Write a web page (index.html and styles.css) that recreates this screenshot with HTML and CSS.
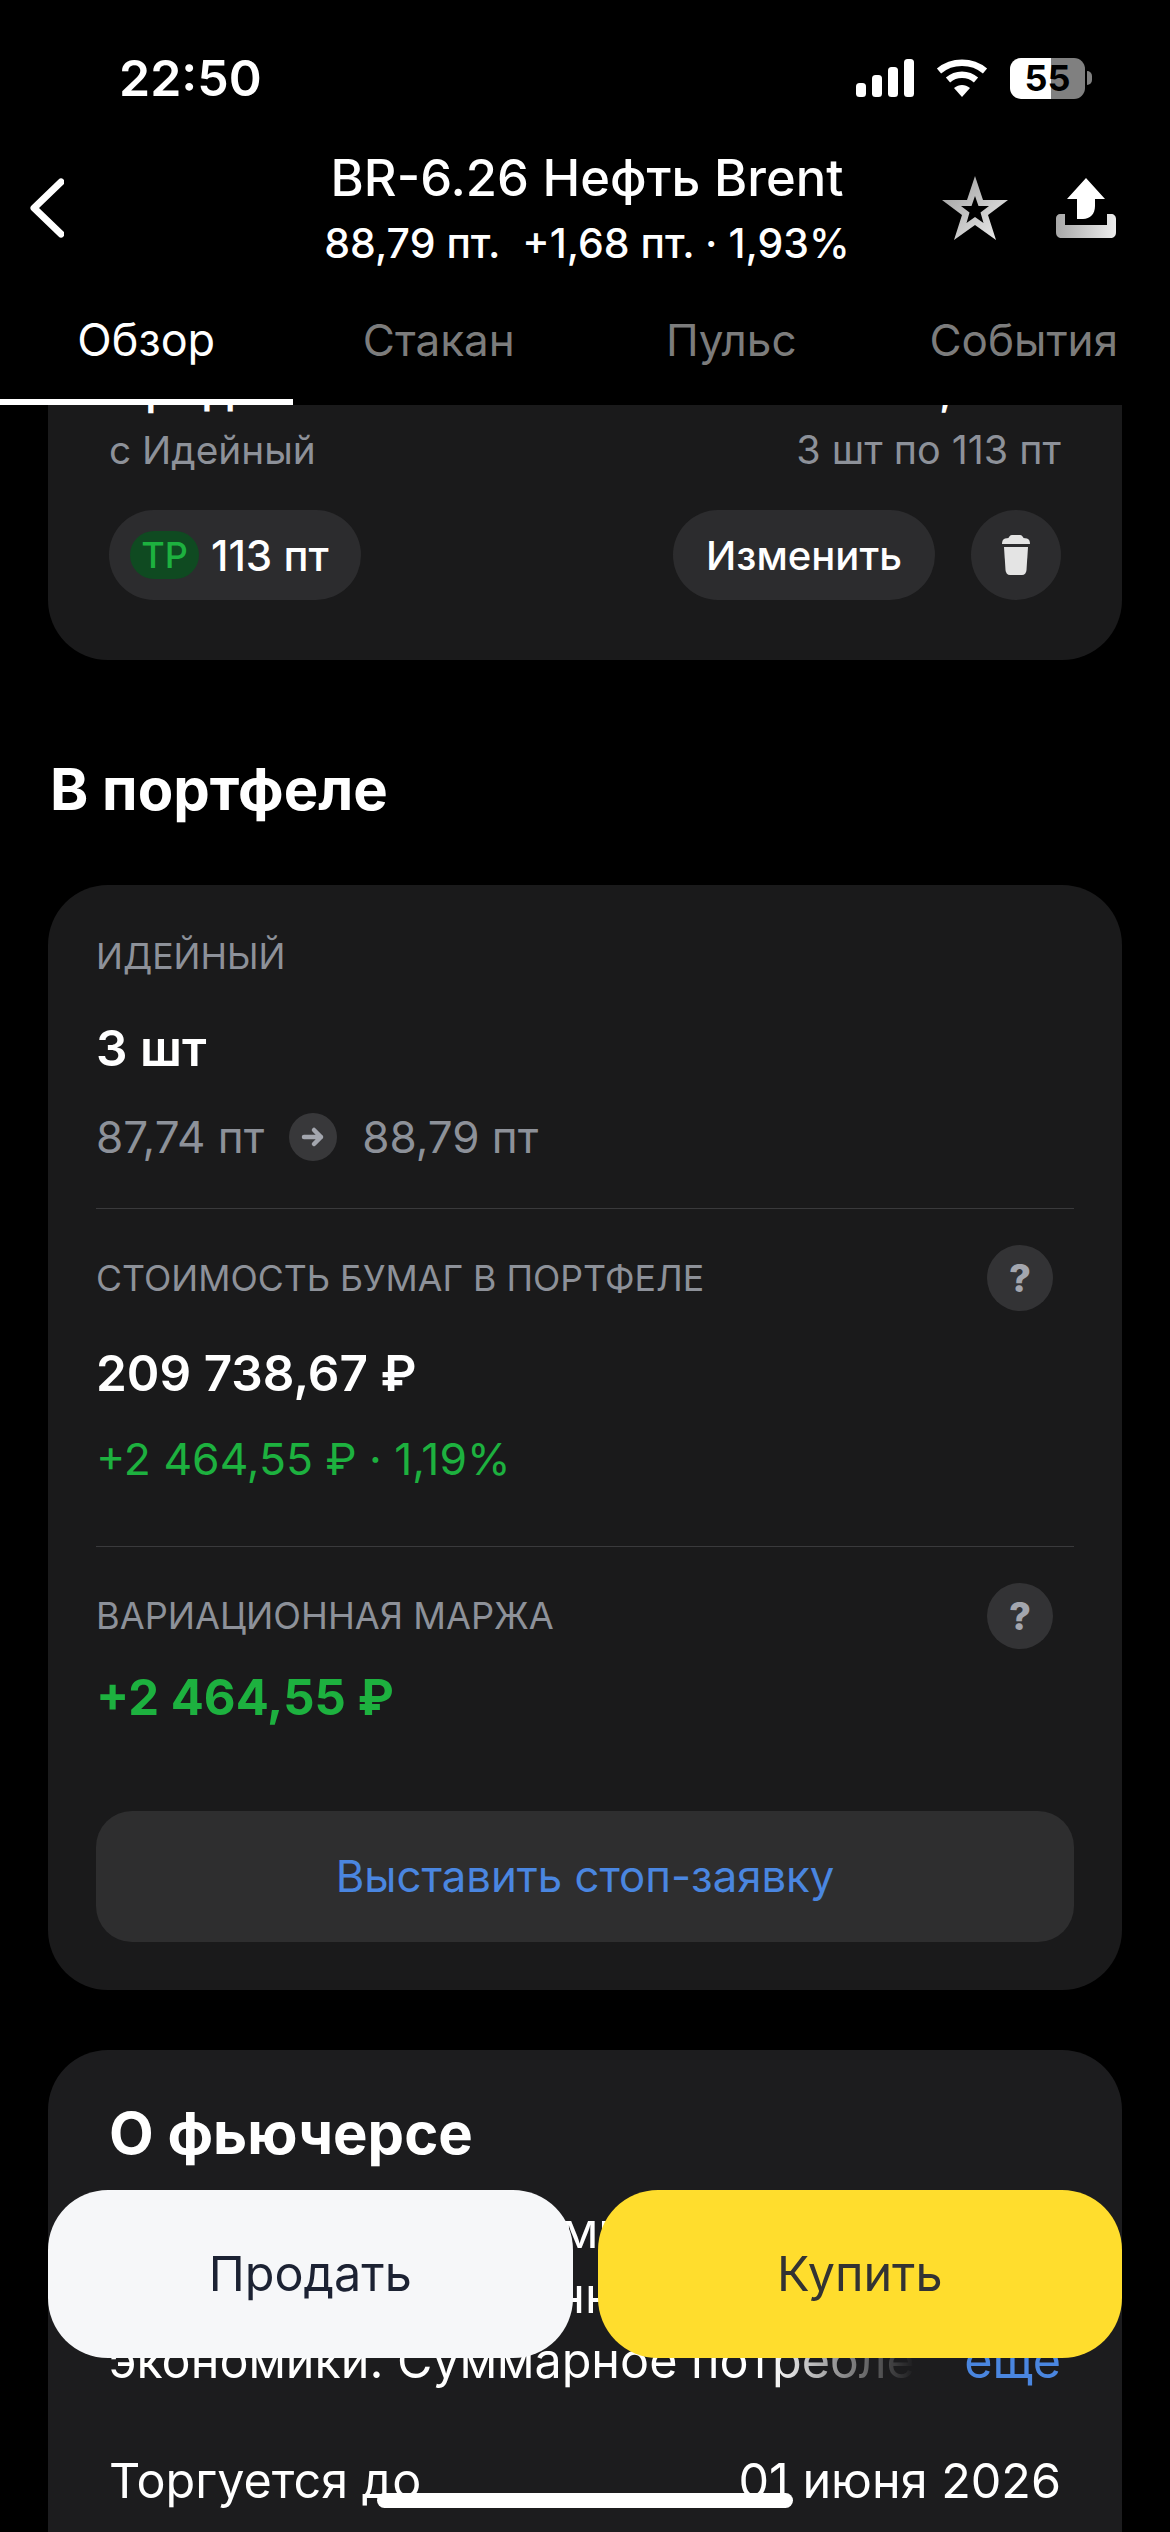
FILE: index.html
```html
<!DOCTYPE html>
<html lang="ru">
  <head>
    <title>BR-6.26 Нефть Brent</title>
    <meta name="viewport" content="width=device-width, initial-scale=1" />
    <link rel="stylesheet" href="styles.css">
  </head>
  <body>
    <div class="screen">
      <!-- Status bar -->
      <div class="status-bar">
        <span class="clock">22:50</span>
        <div class="status-icons">
          <svg class="signal" width="58" height="38" viewBox="0 0 58 38" fill="#fff">
            <rect x="0" y="24" width="10" height="14" rx="3.5" />
            <rect x="16" y="16" width="10" height="22" rx="3.5" />
            <rect x="32" y="8" width="10" height="30" rx="3.5" />
            <rect x="48" y="0" width="10" height="38" rx="3.5" />
          </svg>
          <svg class="wifi" width="52" height="38" viewBox="0 0 52 38" fill="none" stroke="#fff" stroke-width="6.5">
            <path d="M3 12 C16 1 36 1 49 12" />
            <path d="M12 21 C20 14 32 14 40 21" />
            <path d="M18 29 L26 38 L34 29 C29 25 23 25 18 29 Z" fill="#fff" stroke="none" />
          </svg>
          <div class="battery">
            <div class="battery-body">55</div>
            <div class="battery-nub"></div>
          </div>
        </div>
      </div>

      <!-- Header -->
      <div class="nav">
        <svg class="back" width="34" height="60" viewBox="0 0 34 60" fill="none" stroke="#fff" stroke-width="7" stroke-linecap="round" stroke-linejoin="round">
          <path d="M31 4 L4 30 L31 56" />
        </svg>
        <div class="nav-title">
          <div class="ticker">BR-6.26 Нефть Brent</div>
          <div class="quote">88,79 пт.&nbsp; +1,68 пт. · 1,93%</div>
        </div>
        <div class="nav-actions">
          <svg class="star" width="66" height="64" viewBox="0 0 66 64">
            <defs>
              <linearGradient id="star-fill" x1="0" y1="0" x2="1" y2="1">
                <stop offset="0" stop-color="#9a9a9a" />
                <stop offset="1" stop-color="#f0f0f0" />
              </linearGradient>
            </defs>
            <path fill="url(#star-fill)" fill-rule="evenodd" d="M33 0 L41 24 L66 24 L46 39 L54 64 L33 49 L12 64 L20 39 L0 24 L25 24 Z M33 20 L29.5 30 L19 30 L27.5 36.500 L24.500 47 L33 41 L41.500 47 L38.500 36.500 L47 30 L36.500 30 Z" />
          </svg>
          <svg class="share" width="60" height="60" viewBox="0 0 60 60">
            <defs>
              <linearGradient id="tray-fill" x1="0" y1="0" x2="1" y2="0">
                <stop offset="0" stop-color="#a8a8a8" />
                <stop offset="1" stop-color="#ededed" />
              </linearGradient>
            </defs>
            <path fill="#fff" d="M30 0 L49 21 L39 21 L39 28 C39 36 34 41 27 41 L21 41 L21 21 L11 21 Z" />
            <path fill="url(#tray-fill)" d="M4 36 L9 36 L9 47 L51 47 L51 36 L55 36 C58 36 60 38 60 41 L60 54 C60 58 58 60 54 60 L6 60 C2 60 0 58 0 54 L0 40 C0 38 2 36 4 36 Z" />
          </svg>
        </div>
      </div>

      <!-- Tabs -->
      <div class="tabs">
        <div class="tab tab-active">Обзор</div>
        <div class="tab">Стакан</div>
        <div class="tab">Пульс</div>
        <div class="tab">События</div>
      </div>

      <!-- Scrolled content -->
      <div class="content">
        <div class="card order-card">
          <div class="order-row order-head">
            <span>Продажа</span>
            <span>339,00 ₽</span>
          </div>
          <div class="order-row order-sub">
            <span class="order-account">с Идейный</span>
            <span>3 шт по 113 пт</span>
          </div>
          <div class="order-actions">
            <div class="pill pill-tp"><span class="tp-badge">ТР</span>113 пт</div>
            <div class="pill pill-edit">Изменить</div>
            <div class="pill pill-delete">
              <svg width="28" height="40" viewBox="0 0 28 40" fill="#e4e4e4">
                <path d="M10 0 H18 C20 0 21 2 21.500 3 L25 3.500 C27 4 28 6 28 9 H0 C0 6 1 4 3 3.500 L6.500 3 C7 2 8 0 10 0 Z" />
                <path d="M2 12 H26 L24.500 35 C24.300 38 22.500 40 20 40 H8 C5.500 40 3.700 38 3.500 35 Z" />
              </svg>
            </div>
          </div>
        </div>

        <h2 class="section-title">В портфеле</h2>

        <div class="card portfolio-card">
          <div class="block block-first">
            <div class="label">ИДЕЙНЫЙ</div>
            <div class="value qty">3 шт</div>
            <div class="price-change">
              <span>87,74 пт</span>
              <span class="arrow-dot">
                <svg width="24" height="22" viewBox="0 0 24 22" fill="none" stroke="#a3a6ae" stroke-width="4.500" stroke-linecap="round" stroke-linejoin="round">
                  <path d="M3 11 H20 M13 4 L20 11 L13 18" />
                </svg>
              </span>
              <span>88,79 пт</span>
            </div>
          </div>

          <div class="block block-cost">
            <div class="label-row">
              <div class="label">СТОИМОСТЬ БУМАГ В ПОРТФЕЛЕ</div>
              <div class="help">?</div>
            </div>
            <div class="value cost">209 738,67 ₽</div>
            <div class="profit">+2 464,55 ₽ · 1,19%</div>
          </div>

          <div class="block block-margin">
            <div class="label-row">
              <div class="label">ВАРИАЦИОННАЯ МАРЖА</div>
              <div class="help">?</div>
            </div>
            <div class="margin-value">+2 464,55 ₽</div>
          </div>

          <div class="stop-button">Выставить стоп-заявку</div>
        </div>

        <div class="card about-card">
          <h2 class="about-title">О фьючерсе</h2>
          <div class="about-text">
            <div class="about-line">Нефть – один из самых важных</div>
            <div class="about-line">ресурсов современной</div>
            <div class="about-line about-last">
              <span class="about-fade">экономики. Суммарное потребление</span>
              <span class="more">еще</span>
            </div>
          </div>
          <div class="fact-row fact-first">
            <span>Торгуется до</span>
            <span>01 июня 2026</span>
          </div>
          <div class="fact-row">
            <span>Маржа</span>
          </div>
        </div>
      </div>

      <!-- Floating buttons -->
      <div class="trade-bar">
        <div class="trade-button sell">Продать</div>
        <div class="trade-button buy">Купить</div>
      </div>
      <div class="home-indicator"></div>
    </div>
  </body>
</html>
```

FILE: styles.css
```css
/* Page */
* {
  box-sizing: border-box;
}

html,
body {
  margin: 0;
  padding: 0;
  background: #000;
}

.screen {
  position: relative;
  display: flex;
  flex-direction: column;
  width: 1170px;
  height: 2532px;
  overflow: hidden;
  background: #000;
  color: #fff;
  font-family: Inter, "Noto Sans", sans-serif;
}

/* Status bar */
.status-bar {
  display: flex;
  justify-content: space-between;
  align-items: center;
  height: 148px;
  padding: 8px 78px 0 119px;
}

.clock {
  font-size: 50px;
  font-weight: 600;
}

.status-icons {
  display: flex;
  align-items: center;
  gap: 22px;
}

.battery {
  display: flex;
  align-items: center;
  gap: 2px;
}

.battery-body {
  width: 75px;
  height: 41px;
  border-radius: 11px;
  background: linear-gradient(90deg, #fff 0 41px, #808080 41px);
  color: #000;
  font-size: 36px;
  font-weight: 700;
  line-height: 41px;
  text-align: center;
}

.battery-nub {
  width: 5px;
  height: 14px;
  border-radius: 0 5px 5px 0;
  background: #808080;
}

/* Header */
.nav {
  display: grid;
  grid-template-columns: 1fr auto 1fr;
  align-items: center;
  height: 120px;
  padding: 0 26px 0 30px;
}

.nav-title {
  text-align: center;
}

.ticker {
  font-size: 50.700px;
  font-weight: 500;
  line-height: 60px;
}

.quote {
  margin-top: 10px;
  font-size: 41px;
  font-weight: 500;
  line-height: 50px;
}

.nav-actions {
  display: flex;
  justify-content: flex-end;
  align-items: center;
  gap: 48px;
  padding-right: 28px;
}

/* Tabs */
.tabs {
  display: grid;
  grid-template-columns: repeat(4, 1fr);
  height: 137px;
  flex-shrink: 0;
  background: #000;
}

.tab {
  padding-top: 40px;
  color: #7c7c7c;
  font-size: 44px;
  line-height: 64px;
  text-align: center;
}

.tab-active {
  color: #fff;
  font-size: 45px;
  border-bottom: 6px solid #fff;
}

/* Scrolled content */
.content {
  flex: 1;
  min-height: 0;
  overflow: hidden;
  padding: 0 48px;
}

.card {
  background: #1a1a1b;
  border-radius: 60px;
}

/* Order card */
.order-card {
  margin-top: -108px;
  padding: 60px 61px;
}

.order-row {
  display: flex;
  justify-content: space-between;
}

.order-head {
  font-size: 48px;
  font-weight: 500;
  line-height: 60px;
}

.order-sub {
  margin-top: 8px;
  color: #8d9199;
  font-size: 39.500px;
  line-height: 50px;
}

.order-account {
  font-size: 38.800px;
}

.order-actions {
  display: flex;
  align-items: center;
  margin-top: 35px;
}

.pill {
  display: flex;
  align-items: center;
  justify-content: center;
  height: 90px;
  border-radius: 45px;
  background: #2c2c2e;
  font-size: 40px;
  font-weight: 500;
}

.pill-tp {
  width: 252px;
  justify-content: flex-start;
  padding-left: 21px;
  margin-right: auto;
  font-size: 42px;
}

.tp-badge {
  width: 69px;
  height: 48px;
  margin-right: 12px;
  border-radius: 24px;
  background: #0f4a21;
  color: #1db13f;
  font-size: 36px;
  line-height: 48px;
  text-align: center;
}

.pill-edit {
  width: 262px;
  margin-right: 36px;
}

.pill-delete {
  width: 90px;
}

/* Portfolio */
.section-title {
  margin: 94px 0 61px 2px;
  font-size: 58px;
  font-weight: 700;
  line-height: 70px;
}

.portfolio-card {
  padding: 49px 48px 48px;
}

.block-first {
  padding-bottom: 43px;
  border-bottom: 1px solid #3a3a3c;
}

.label {
  color: #8d9199;
  font-size: 35.700px;
  line-height: 44px;
}

.value {
  font-size: 49.500px;
  font-weight: 600;
  line-height: 60px;
}

.qty {
  margin-top: 40px;
}

.price-change {
  display: flex;
  align-items: center;
  gap: 25px;
  margin-top: 31px;
  color: #8d9199;
  font-size: 44px;
  line-height: 56px;
}

.arrow-dot {
  display: flex;
  align-items: center;
  justify-content: center;
  width: 48px;
  height: 48px;
  border-radius: 50%;
  background: #38383a;
}

.label-row {
  display: flex;
  justify-content: space-between;
  align-items: center;
  height: 66px;
  padding-right: 21px;
}

.help {
  width: 66px;
  height: 66px;
  border-radius: 50%;
  background: #333335;
  color: #a3a6ae;
  font-size: 38px;
  font-weight: 800;
  line-height: 66px;
  text-align: center;
}

.block-cost {
  padding: 36px 0 59px;
  border-bottom: 1px solid #3a3a3c;
}

.cost {
  margin-top: 32px;
}

.profit {
  margin-top: 28px;
  color: #1db13f;
  font-size: 44.400px;
  line-height: 56px;
}

.block-margin {
  padding-top: 36px;
}

.block-margin .label {
  font-size: 36.200px;
}

.margin-value {
  margin-top: 19px;
  color: #1db13f;
  font-size: 49px;
  font-weight: 700;
  line-height: 60px;
}

.stop-button {
  height: 131px;
  margin-top: 83px;
  border-radius: 36px;
  background: #2e2e2f;
  color: #4a86e0;
  font-size: 43.700px;
  line-height: 131px;
  text-align: center;
}

/* About */
.about-card {
  margin-top: 60px;
  padding: 48px 61px;
  background: #1c1c1e;
}

.about-title {
  margin: 0;
  font-size: 58px;
  font-weight: 700;
  line-height: 70px;
}

.about-text {
  margin-top: 30px;
  font-size: 48.500px;
  line-height: 65px;
}

.about-line {
  white-space: nowrap;
}

.about-last {
  display: flex;
  justify-content: space-between;
}

.about-fade {
  width: 806px;
  overflow: hidden;
  -webkit-mask-image: linear-gradient(90deg, #000 82%, transparent 100%);
  mask-image: linear-gradient(90deg, #000 82%, transparent 100%);
}

.more {
  color: #4a86e0;
}

.fact-row {
  display: flex;
  justify-content: space-between;
  font-size: 48.500px;
  line-height: 60px;
  margin-top: 10px;
}

.fact-first {
  margin-top: 58px;
}

/* Floating buttons */
.trade-bar {
  position: absolute;
  left: 48px;
  right: 48px;
  top: 2190px;
  display: flex;
  gap: 25px;
}

.trade-button {
  flex: 1;
  height: 168px;
  border-radius: 60px;
  font-size: 48.500px;
  line-height: 168px;
  text-align: center;
}

.sell {
  background: #f6f7f9;
  color: #1c2233;
}

.buy {
  background: #ffdd2d;
  color: #333;
}

.home-indicator {
  position: absolute;
  left: 377px;
  top: 2493px;
  width: 416px;
  height: 15px;
  border-radius: 8px;
  background: #fff;
}
```
